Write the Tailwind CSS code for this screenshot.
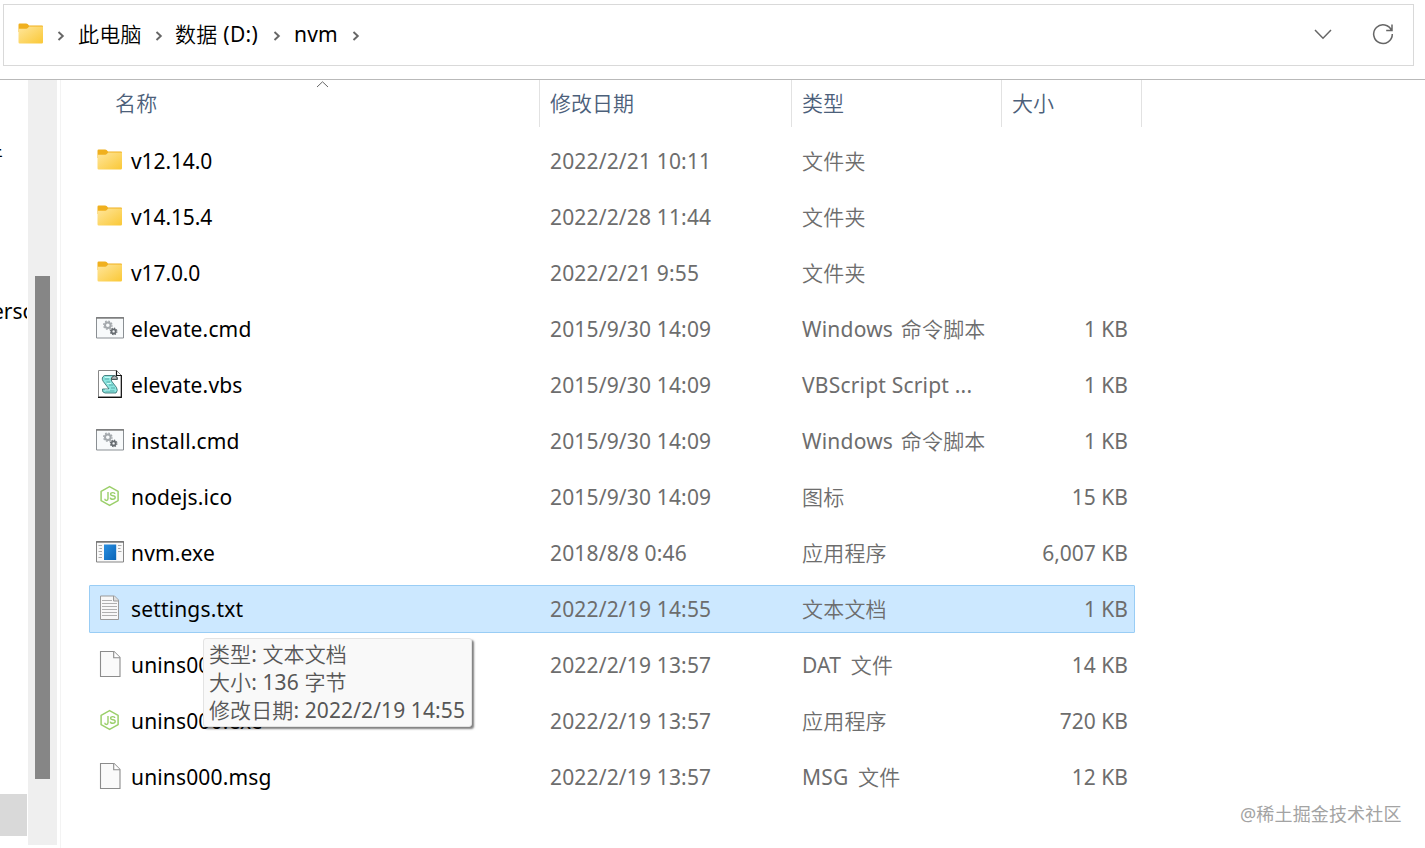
<!DOCTYPE html>
<html lang="zh-CN">
<head>
  <meta charset="UTF-8" />
  <title>nvm</title>
  <meta name="viewport" content="width=device-width, initial-scale=1" />
  <script src="https://cdn.jsdelivr.net/npm/@tailwindcss/browser@4"></script>
</head>
<body class="h-screen overflow-hidden bg-white font-['Noto_Sans','Noto_Sans_CJK_SC_DemiLight','Noto_Sans_CJK_SC_Light','Noto_Sans_CJK_SC',sans-serif] text-[21px] leading-7 text-black">

  <!-- Address bar -->
  <header class="h-20 border-b border-[#b9b9b9] pt-1 pl-[3px] pr-[11px]">
    <div class="flex h-[62px] items-center border border-[#d9d9d9] pb-[2px] pl-[13px] pr-[18px]">
      <svg class="h-7 w-7 shrink-0" viewBox="0 0 28 28"><use href="#folder" /></svg>
      <svg class="ml-3 h-3 w-2 shrink-0 translate-y-[2px]" viewBox="0 0 8 12" fill="none" stroke="#666" stroke-width="1.9"><path d="M1.5 2 5.8 6 1.5 10" /></svg>
      <span class="ml-[13px] w-[64px] whitespace-nowrap tracking-[0.2px]">此电脑</span>
      <svg class="ml-[13px] h-3 w-2 shrink-0 translate-y-[2px]" viewBox="0 0 8 12" fill="none" stroke="#666" stroke-width="1.9"><path d="M1.5 2 5.8 6 1.5 10" /></svg>
      <span class="ml-[12px] w-[85px] whitespace-nowrap tracking-[0.3px]">数据 (D:)</span>
      <svg class="ml-[13px] h-3 w-2 shrink-0 translate-y-[2px]" viewBox="0 0 8 12" fill="none" stroke="#666" stroke-width="1.9"><path d="M1.5 2 5.8 6 1.5 10" /></svg>
      <span class="ml-[13px] w-11 whitespace-nowrap tracking-[0.2px]">nvm</span>
      <svg class="ml-[14px] h-3 w-2 shrink-0 translate-y-[2px]" viewBox="0 0 8 12" fill="none" stroke="#666" stroke-width="1.9"><path d="M1.5 2 5.8 6 1.5 10" /></svg>
      <svg class="ml-auto h-5 w-5" viewBox="0 0 20 20" fill="none" stroke="#666" stroke-width="1.5"><path d="M2 6 10 14.2 18 6" /></svg>
      <svg class="ml-[38px] h-6 w-6" viewBox="0 0 24 24" fill="none" stroke="#666" stroke-width="1.5">
        <path d="M20.6 8.6A9.3 9.3 0 1 0 21.3 12M21 2.6V8.4H15.2" />
      </svg>
    </div>
  </header>

  <div class="flex h-[768px]">
    <!-- Navigation pane, scrolled to the right -->
    <aside class="w-7 overflow-hidden">
      <div class="mt-[60px] flex h-7 w-[3px] justify-end overflow-hidden">件</div>
      <div class="mt-[129px] flex h-7 w-[27px] justify-start overflow-hidden"><span class="-ml-[8px]">ersonal</span></div>
      <div class="mt-[469px] h-[42px] w-[27px] bg-[#d9d9d9]"></div>
    </aside>
    <div class="h-[765px] w-[29px] bg-[#efefef] pl-[7px] pt-[196px]">
      <div class="h-[503px] w-[15px] bg-[#868686]"></div>
    </div>
    <div class="ml-[3px] w-px bg-[#f3f3f3]"></div>

    <main class="flex-1 pl-7">
      <!-- Column headings -->
      <div class="relative flex h-[47px] text-[#4c607a]">
        <svg class="absolute left-[227px] top-0 h-2 w-3" viewBox="0 0 12 8" fill="none" stroke="#666" stroke-width="1"><path d="M1 7 6.5 1.8 12 7" /></svg>
        <div class="w-[451px] border-r border-[#e2e2e2] pl-[26px] pt-[9px] tracking-[0.2px]">名称</div>
        <div class="w-[252px] border-r border-[#e2e2e2] pl-[10px] pt-[9px]">修改日期</div>
        <div class="w-[210px] border-r border-[#e2e2e2] pl-[10px] pt-[9px]">类型</div>
        <div class="w-[140px] border-r border-[#e2e2e2] pl-[10px] pt-[9px]">大小</div>
      </div>
      <ul id="fileList" class="flex flex-col gap-2 pt-[10px]"></ul>
    </main>
  </div>

  <!-- Hover tooltip -->
  <div class="absolute left-[203px] top-[638px] h-[89px] w-[269px] whitespace-nowrap rounded-[3px] border border-[#e3e3e3] bg-[#f9f9f9] pl-[5px] pt-px tracking-[0.1px] text-[#575757] shadow-[2px_2px_2px_rgba(0,0,0,0.5)]">
    <p>类型: 文本文档</p>
    <p>大小: 136 字节</p>
    <p>修改日期: 2022/2/19 14:55</p>
  </div>

  <div class="absolute left-[1240px] top-[800px] whitespace-nowrap font-['Noto_Sans','Noto_Sans_CJK_SC',sans-serif] text-[18px] tracking-[0.15px] text-[#a3a3a3]">@稀土掘金技术社区</div>

  <!-- Icon sprites -->
  <svg class="absolute h-0 w-0">
    <linearGradient id="folderFill" x1="0" y1="0" x2="1" y2="1">
      <stop offset="0" stop-color="#ffe69c" />
      <stop offset="1" stop-color="#fac836" />
    </linearGradient>
    <linearGradient id="exeFill" x1="0" y1="0" x2="1" y2="1">
      <stop offset="0" stop-color="#2a8fe0" />
      <stop offset="1" stop-color="#0864b8" />
    </linearGradient>
    <symbol id="folder" viewBox="0 0 28 28">
      <path fill="#f0b01e" d="M1.5 4.7Q1.5 3.5 2.7 3.5H9.2Q10 3.5 10.6 4.1L12 5.5H25Q26 5.5 26 6.5V12H1.5Z" />
      <path fill="url(#folderFill)" d="M1.5 8.8H9.3Q10.2 8.8 10.8 8.1L12.2 6.5H26V22.2Q26 23.4 24.8 23.4H2.7Q1.5 23.4 1.5 22.2Z" />
    </symbol>
    <symbol id="cmd" viewBox="0 0 28 28">
      <path fill="#f8fafb" stroke="#8a8f93" d="M.5 3.5H27.5V24H.5Z" />
      <path stroke="#777" stroke-width="1.4" d="M0 4H28" />
      <g fill="none" stroke="#a4a9ad">
        <circle cx="11.8" cy="11.2" r="2.8" stroke-width="2" />
        <circle cx="11.8" cy="11.2" r="4.2" stroke-width="1.3" stroke-dasharray="1.7 1.6" />
      </g>
      <g fill="none" stroke="#666b70">
        <circle cx="17.6" cy="17.4" r="2.1" stroke-width="1.8" />
        <circle cx="17.6" cy="17.4" r="3.3" stroke-width="1.1" stroke-dasharray="1.4 1.19" />
      </g>
    </symbol>
    <symbol id="vbs" viewBox="0 0 28 28">
      <path fill="#fff" stroke="#888" d="M2.5 .5H20.5L25.5 5.5V27H2.5Z" />
      <path fill="none" stroke="#111" stroke-width="1.2" d="M20.5 .5V5.5H25.3V27.3H2" />
      <path fill="#8be6e0" stroke="#2b6668" stroke-width=".8" d="M8.5 5.5H18.5Q21.8 6.2 21.4 9.3H16.5Q14.8 9.5 15.5 11L20.5 17.5Q22.3 20.5 20 23H9Q5.8 22.5 6.5 19H13L7.3 11.5Q4.7 7.5 8.5 5.5Z" />
      <path fill="#b3babd" stroke="#333" stroke-width=".8" d="M15.2 9.3Q15.6 6.1 18.5 5.8Q21.8 6.5 21.3 9.3Z" />
      <path fill="none" stroke="#3a8587" stroke-width=".6" d="M8.6 9H13M10.5 12H14M13 15H17.3M15 18H19M9.5 21H18.5" />
      <path fill="none" stroke="#d6fffc" stroke-width=".9" d="M9 7.4H14.5M11 13.5H15M9 20H14" />
    </symbol>
    <symbol id="node" viewBox="0 0 28 28">
      <path fill="none" stroke="#9bcf6a" stroke-width="1.5" stroke-linejoin="round" d="M13.6 4.6 22.1 9.3V18.6L13.6 23.4 5.1 18.6V9.3Z" />
      <path fill="none" stroke="#9bcf6a" stroke-width="1.4" d="M12 10V16.8Q12 18.5 10.4 18.5Q8.8 18.5 8.8 16.8M18.9 12Q18.7 10.6 16.8 10.6Q14.6 10.6 14.6 12.2Q14.6 13.6 16.8 13.8Q19.2 14 19.2 15.6Q19.2 17.3 16.8 17.3Q14.4 17.3 14.3 15.6" />
    </symbol>
    <symbol id="exe" viewBox="0 0 28 28">
      <path fill="#f9f9f9" stroke="#858585" d="M.5 3.5H27.5V24H.5Z" />
      <path stroke="#707070" stroke-width="1.4" d="M0 4H28" />
      <path fill="url(#exeFill)" d="M8 6.5H20.2V22H8Z" />
      <path stroke="#aaa" stroke-width="1" d="M2.5 7.5H6M3.5 10.5H6M2.5 13.5H6M3.5 16.5H6M2.5 19.5H6M22 7.5H25.5M22 10.5H24.5M22 13.5H25.5" />
    </symbol>
    <symbol id="txt" viewBox="0 0 28 28">
      <path fill="#f8f8f8" stroke="#9a9a9a" d="M4.5 2H18.5L22.5 6V25.5H4.5Z" />
      <path fill="#ddd" stroke="#9a9a9a" d="M17.5 2V7H22.5" />
      <path stroke="#b0b0b0" d="M6 6.5H16M6 9.5H21M6 12.5H21M6 15.5H21M6 18.5H21M6 21.5H21" />
    </symbol>
    <symbol id="blank" viewBox="0 0 28 28">
      <path fill="#fafafa" stroke="#8c8c8c" stroke-width="1.1" d="M4.5 1.5H18L24 7.5V26.5H4.5Z" />
      <path fill="#fff" stroke="#8c8c8c" stroke-width="1.1" d="M17.7 1.5V7.8H24" />
    </symbol>
  </svg>

  <script>
    const files = [
      { icon: "folder", name: "v12.14.0", date: "2022/2/21 10:11", type: "文件夹", size: "" },
      { icon: "folder", name: "v14.15.4", date: "2022/2/28 11:44", type: "文件夹", size: "" },
      { icon: "folder", name: "v17.0.0", date: "2022/2/21 9:55", type: "文件夹", size: "" },
      { icon: "cmd", name: "elevate.cmd", date: "2015/9/30 14:09", type: "Windows 命令脚本", size: "1 KB", typeClass: "[word-spacing:2px]" },
      { icon: "vbs", name: "elevate.vbs", date: "2015/9/30 14:09", type: "VBScript Script ...", size: "1 KB" },
      { icon: "cmd", name: "install.cmd", date: "2015/9/30 14:09", type: "Windows 命令脚本", size: "1 KB", typeClass: "[word-spacing:2px]" },
      { icon: "node", name: "nodejs.ico", date: "2015/9/30 14:09", type: "图标", size: "15 KB" },
      { icon: "exe", name: "nvm.exe", date: "2018/8/8 0:46", type: "应用程序", size: "6,007 KB" },
      { icon: "txt", name: "settings.txt", date: "2022/2/19 14:55", type: "文本文档", size: "1 KB", selected: true },
      { icon: "blank", name: "unins000.dat", date: "2022/2/19 13:57", type: "DAT 文件", size: "14 KB", typeClass: "[word-spacing:4px]" },
      { icon: "node", name: "unins000.exe", date: "2022/2/19 13:57", type: "应用程序", size: "720 KB" },
      { icon: "blank", name: "unins000.msg", date: "2022/2/19 13:57", type: "MSG 文件", size: "12 KB", typeClass: "[word-spacing:4px]" }
    ];

    document.getElementById('fileList').innerHTML = files.map(file => `
      <li class="flex h-12 w-[1046px] items-center whitespace-nowrap rounded-[1px] border px-[6px] text-[#6d6d6d] ${file.selected ? 'border-[#99cdf5] bg-[#cce8ff]' : 'border-transparent'}">
        <svg class="h-7 w-7 shrink-0 -translate-y-px"><use href="#${file.icon}" /></svg>
        <span class="ml-[7px] w-[419px] text-black ${/^v\d/.test(file.name) ? 'tracking-[-0.1px]' : 'tracking-[0.15px]'}">${file.name}</span>
        <span class="w-[252px] tracking-[0.16px]">${file.date}</span>
        <span class="w-[210px] tracking-[0.2px] ${file.typeClass || ''}">${file.type}</span>
        <span class="flex-1 text-right">${file.size}</span>
      </li>
    `).join('');
  </script>
</body>
</html>
